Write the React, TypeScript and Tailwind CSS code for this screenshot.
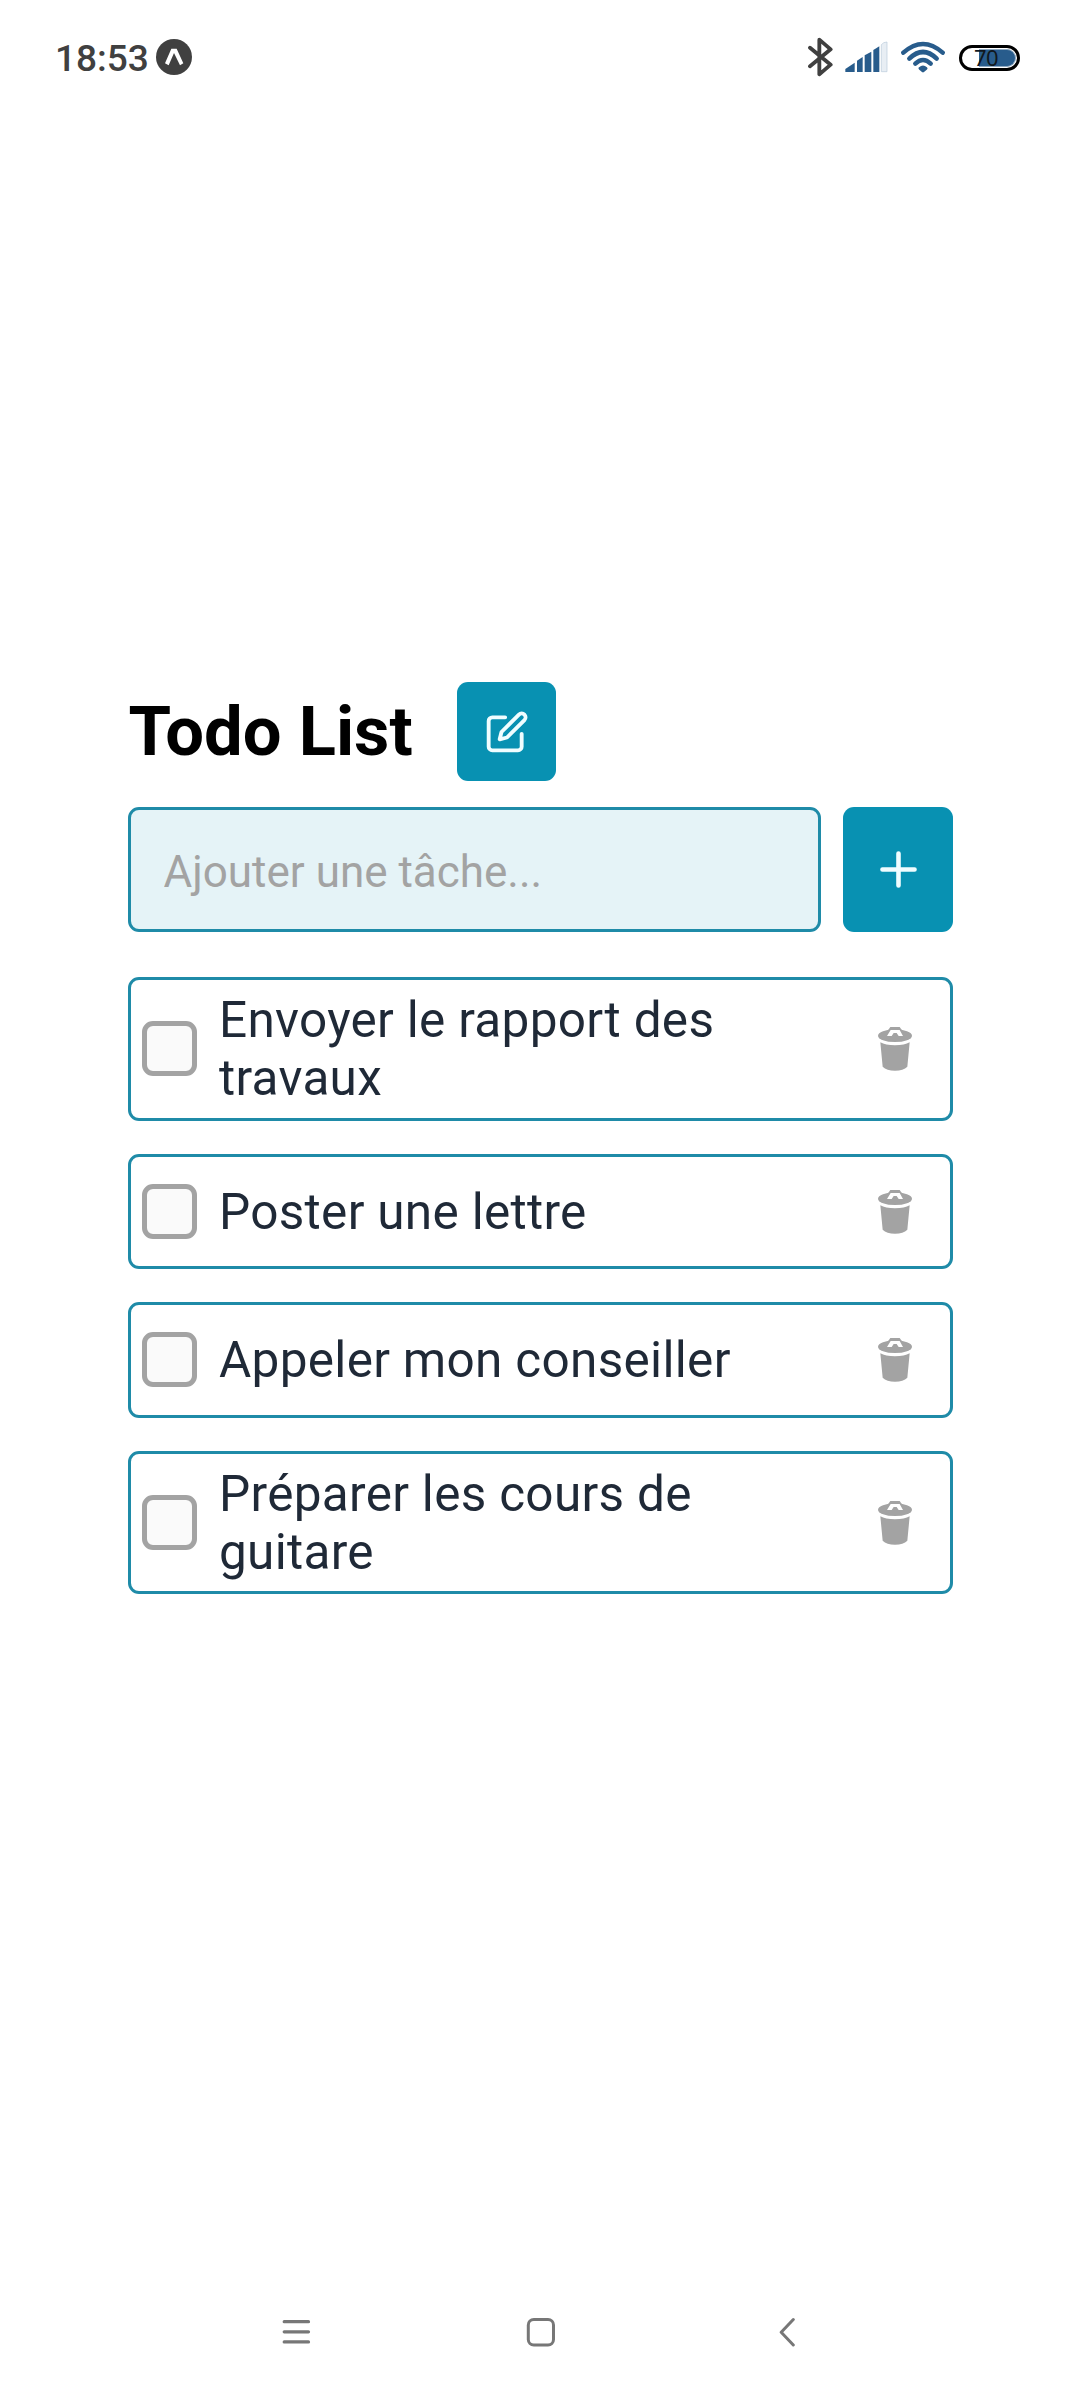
import React, { useState } from "react";

const tasks = [
  "Envoyer le rapport des travaux",
  "Poster une lettre",
  "Appeler mon conseiller",
  "Préparer les cours de guitare",
];

function StatusBar() {
  return (
    <header className="flex h-[114px] items-center pl-[55px] pr-[60px] text-[#404040]">
      <span className="w-[101px] whitespace-nowrap pt-[4px] text-[37px] leading-[44px] font-medium">18:53</span>
      <svg className="h-[36px] w-[36px]" viewBox="0 0 108 108">
        <circle cx="54" cy="54" r="54" fill="#404040" />
        <path d="M27 73 46 29H62L82 73 72 79 54 42 38 79Z" fill="#fff" />
      </svg>
      <div className="ml-auto flex items-center">
        <svg className="h-[40px] w-[26px]" viewBox="50 50 78 120" fill="none" stroke="#404040" strokeWidth="11.5" strokeLinecap="round" strokeLinejoin="round">
          <path d="M59 82 121 133 87 162V58L121 87 59 138" />
        </svg>
        <svg className="ml-[11px] h-[34px] w-[46px]" viewBox="161 60 138 102">
          <g fill="#285c8c">
            <path d="M165 156V147L193 128V156Z" />
            <path d="M200 156V122L217 111V156Z" />
            <path d="M223 156V106L243 95V156Z" />
            <path d="M249 156V90L267 79V156Z" />
          </g>
          <path d="M273 155V74Q279 66 290 66V155Z" fill="#e8eef4" stroke="#b9cadb" strokeWidth="2" />
        </svg>
        <svg className="ml-[9px] h-[34px] w-[48px]" viewBox="327 60 144 102" fill="none" stroke="#285c8c" strokeWidth="13.5" strokeLinecap="round">
          <path d="M340 98Q399 46 458 98" />
          <path d="M358 116Q399 76 440 116" />
          <path d="M376 131Q399 109 422 131" />
          <path d="M390 145Q399 138 408 145L399 153Z" fill="#285c8c" strokeWidth="9" strokeLinejoin="round" />
        </svg>
        <div className="relative ml-[12px] mt-[2px] flex h-[26px] w-[61px] items-center rounded-full border-[3px] border-black bg-white p-[1px]">
          <div className="ml-[16px] h-full flex-1 rounded-r-full border border-l-0 border-[#8ea9c2] bg-[#285c8c]" />
          <span className="absolute left-[12px] top-[-4px] text-[22px] leading-[26px] tracking-[-0.5px] text-[#101820] font-['Noto_Sans']">70</span>
        </div>
      </div>
    </header>
  );
}

function EditIcon() {
  return (
    <svg className="ml-px h-[44px] w-[44px]" viewBox="0 0 24 24" fill="none" stroke="#f0fdff" strokeWidth="2.1" strokeLinecap="round" strokeLinejoin="round">
      <path d="M11 4H4a2 2 0 0 0-2 2v14a2 2 0 0 0 2 2h14a2 2 0 0 0 2-2v-7" />
      <path d="M18.5 2.5a2.121 2.121 0 0 1 3 3L12 15l-4 1 1-4 9.5-9.5z" />
    </svg>
  );
}

function TrashIcon() {
  return (
    <svg className="mt-px h-[44px] w-[34px] shrink-0" viewBox="534 741 102 132" fill="#a3a3a3">
      <path d="M563 752 571 741H599L607 752Z" />
      <ellipse cx="585" cy="767" rx="51" ry="19" />
      <path d="M561 768 572 750H599L609 768H596L590 759H581L575 768Z" fill="#fff" />
      <path d="M541 787Q556 796 585 796T629 787L622 860Q610 872 585 872T548 860Z" />
    </svg>
  );
}

function TodoItem({ label }: { label: string }) {
  const [done, setDone] = useState(false);
  return (
    <li className="flex items-center rounded-[11px] border-[3px] border-[#1f8ba8] py-[10.75px] pl-[11px] pr-[38px]">
      <button
        aria-label={label}
        onClick={() => setDone(!done)}
        className={
          done
            ? "h-[55px] w-[55px] shrink-0 rounded-[11px] border-[5px] border-[#a3a3a3] bg-[#0891b2]"
            : "h-[55px] w-[55px] shrink-0 rounded-[11px] border-[5px] border-[#a3a3a3] bg-[#fafafa]"
        }
      />
      <div className="ml-[22.5px] flex min-h-[88px] w-[560px] items-center">
        <span className="-mb-[0.5px] mt-[0.5px] text-[49.5px] leading-[58px] tracking-[0.3px] text-[#1f2937]">{label}</span>
      </div>
      <div className="ml-auto flex">
        <TrashIcon />
      </div>
    </li>
  );
}

function NavBar() {
  return (
    <nav className="flex h-[136px] items-center pl-[282px]">
      <svg className="h-[30px] w-[29px]" viewBox="0 0 29 30" stroke="#777" strokeWidth="3.2" strokeLinecap="round">
        <path d="M2.200 4.700H26.500M2.200 14.800H26.500M2.200 24.900H26.500" />
      </svg>
      <svg className="ml-[215px] h-[30px] w-[30px]" viewBox="0 0 30 30" fill="none" stroke="#777" strokeWidth="3">
        <rect x="2.3" y="2.5" width="25.2" height="25.5" rx="5.5" />
      </svg>
      <svg className="ml-[222px] h-[30px] w-[18px]" viewBox="0 0 18 30" fill="none" stroke="#777" strokeWidth="3" strokeLinecap="round" strokeLinejoin="round">
        <path d="M15.300 2.500 3.200 15.300 15.300 28" />
      </svg>
    </nav>
  );
}

export default function App() {
  return (
    <div className="flex h-[2400px] w-[1080px] flex-col bg-white font-[Roboto,sans-serif]">
      <StatusBar />
      <main className="mx-auto mt-[568px] w-[825px] flex-1">
        <div className="flex items-center">
          <h1 className="w-[329px] whitespace-nowrap pl-px text-[68.75px] font-bold leading-[81px] text-black">Todo List</h1>
          <button aria-label="Modifier" className="flex h-[99px] w-[99px] items-center justify-center rounded-[11px] bg-[#0891b2]">
            <EditIcon />
          </button>
        </div>
        <div className="mt-[26px] flex gap-[22px]">
          <input
            placeholder="Ajouter une tâche..."
            className="h-[125px] w-[693px] rounded-[11px] border-[3px] border-[#1f8ba8] bg-[#e5f3f7] pl-[33px] pt-[5px] text-[44px] outline-none placeholder:text-[#a3a3a3] placeholder:opacity-100"
          />
          <button aria-label="Ajouter" className="flex h-[125px] w-[110px] items-center justify-center rounded-[11px] bg-[#0891b2]">
            <svg className="ml-px h-[55px] w-[55px]" viewBox="0 0 24 24" stroke="#f0fdff" strokeWidth="2" strokeLinecap="round">
              <path d="M12 5V19M5 12H19" />
            </svg>
          </button>
        </div>
        <ul className="mt-[45px] flex flex-col gap-[33px]">
          {tasks.map((t) => (
            <TodoItem key={t} label={t} />
          ))}
        </ul>
      </main>
      <NavBar />
    </div>
  );
}
